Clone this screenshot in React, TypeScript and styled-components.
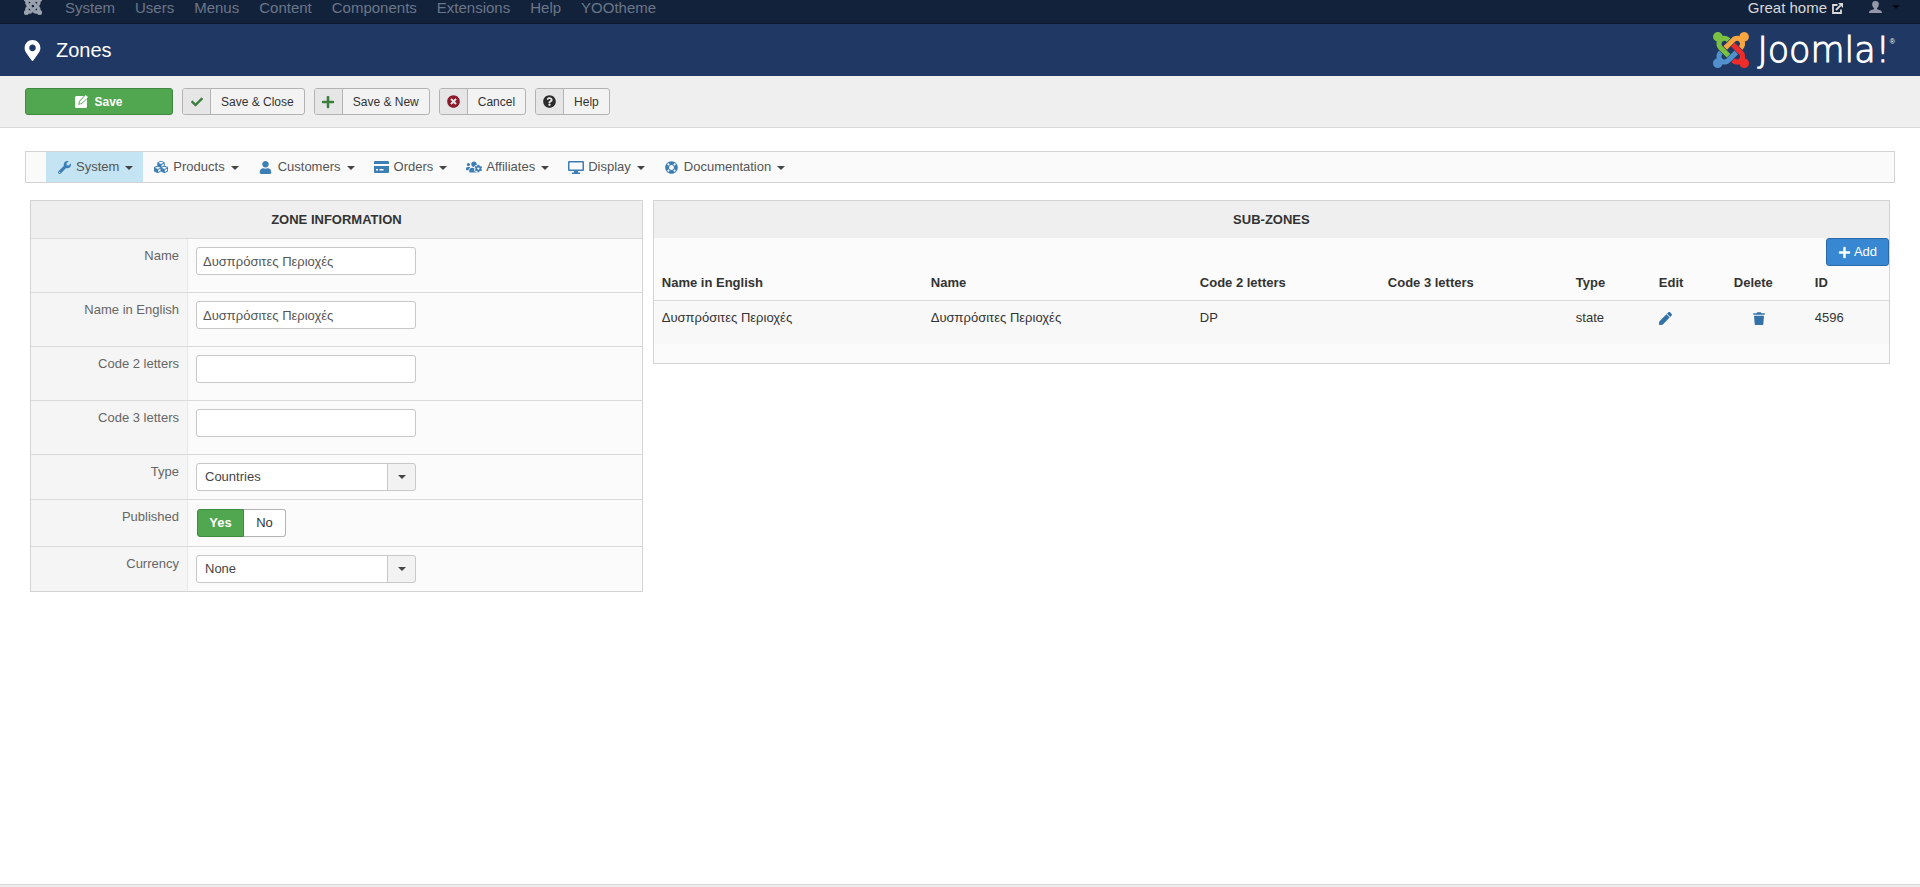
import React from 'react';
import styled, { createGlobalStyle } from 'styled-components';
import {
  FaCheck,
  FaCubes,
  FaLifeRing,
  FaMapMarkerAlt,
  FaPen,
  FaPlus,
  FaQuestionCircle,
  FaTimesCircle,
  FaUser,
  FaUsersCog,
  FaWrench,
} from 'react-icons/fa';

const GlobalStyle = createGlobalStyle`
  *, *::before, *::after { box-sizing: border-box; }
  body {
    margin: 0;
    background: #fff;
    color: #333;
    font: 13px/18px "Liberation Sans", Arial, sans-serif;
  }
  button, input, select { font: inherit; }
`;

const Page = styled.div`
  display: flex;
  flex-direction: column;
  min-height: 100vh;
`;

const TopBar = styled.nav`
  display: flex;
  align-items: flex-start;
  height: 24px;
  padding: 0 20px 0 24px;
  overflow: hidden;
  background: #13223b;
  border-bottom: 1px solid #0c192e;
  font-size: 15px;
  line-height: 16px;
`;

const BrandLink = styled.a`
  display: flex;
  margin-right: 23px;
  margin-top: -3px;
  color: #9ba3af;
`;

const TopMenu = styled.div`
  display: flex;
  gap: 20px;
  flex: 1;
`;

const TopLink = styled.a`
  color: #6b7688;
  text-decoration: none;
`;

const SiteLink = styled.a`
  display: flex;
  align-items: center;
  gap: 5px;
  color: #d9d9d9;
  text-decoration: none;
`;

const UserButton = styled.button`
  display: flex;
  align-items: center;
  gap: 10px;
  height: 14px;
  margin-left: 26px;
  padding: 0;
  border: 0;
  background: none;
  color: #9498a8;
`;

const Caret = styled.span<{ $color?: string; $size?: number }>`
  width: 0;
  height: 0;
  border: ${(p) => p.$size ?? 4}px solid transparent;
  border-top-color: ${(p) => p.$color ?? '#444'};
  border-bottom: 0;
`;

const Header = styled.header`
  display: flex;
  align-items: center;
  justify-content: space-between;
  height: 52px;
  padding: 0 25px;
  background: #1f3964;
  color: #fff;
`;

const Title = styled.h1`
  display: flex;
  align-items: center;
  gap: 16px;
  margin: 0;
  font-size: 20px;
  line-height: 24px;
  font-weight: 400;
`;

const TitleIcon = styled.span`
  display: flex;
  justify-content: center;
  width: 15px;

  svg { flex: none; }
`;

const Logo = styled.div`
  display: flex;
  align-items: center;
  gap: 8px;
`;

const WordMark = styled.span`
  display: flex;
  align-items: flex-start;
  font: 200 35px/36px "DejaVu Sans", sans-serif;
  -webkit-text-stroke: 1px #fff;

  sup {
    padding-top: 6px;
    font: 7px/8px "Liberation Sans", Arial, sans-serif;
    -webkit-text-stroke: 0;
  }
`;

const Toolbar = styled.div`
  display: flex;
  gap: 9px;
  padding: 12px 25px;
  background: #efefef;
  border-bottom: 1px solid #d9d9d9;
`;

const SaveButton = styled.button`
  display: flex;
  align-items: center;
  justify-content: center;
  gap: 6px;
  width: 148px;
  height: 27px;
  padding: 0;
  border: 1px solid #3f8a40;
  border-radius: 3px;
  background: #51a650;
  color: #fff;
  font-size: 12px;
  font-weight: 700;
`;

const ToolButton = styled.button<{ $tint: string }>`
  display: flex;
  align-items: stretch;
  height: 27px;
  padding: 0;
  border: 1px solid #b3b3b3;
  border-radius: 3px;
  overflow: hidden;
  background: #f3f3f3;
  color: #333;
  font-size: 12px;
  line-height: 26px;

  span:first-child {
    display: flex;
    align-items: center;
    justify-content: center;
    width: 28px;
    background: #e6e6e6;
    border-right: 1px solid #b3b3b3;
    color: ${(p) => p.$tint};
  }
  span:last-child { padding: 0 10px; }
`;

const Content = styled.main`
  flex: 1;
  padding: 23px 25px;
`;

const MenuBar = styled.nav`
  display: flex;
  height: 32px;
  padding-left: 20px;
  background: #fafafa;
  border: 1px solid #d3d3d3;
`;

const MenuItem = styled.a<{ $active?: boolean }>`
  display: flex;
  align-items: center;
  padding: 0 9px 0 10px;
  background: ${(p) => (p.$active ? '#c4e4f3' : 'transparent')};
  color: #555;
  text-decoration: none;

  &:first-child { padding-right: 10px; }
  ${Caret} { margin: 2px 0 0 6px; }
`;

const MenuIcon = styled.span`
  display: flex;
  justify-content: center;
  width: 16px;
  margin-right: 4px;
  color: #3d7fb5;
`;

const Panels = styled.div`
  display: flex;
  align-items: flex-start;
  gap: 10px;
  padding: 17px 5px;
`;

const Panel = styled.section<{ $wide?: boolean }>`
  ${(p) => (p.$wide ? 'flex: 1; min-width: 0;' : 'flex: 0 0 calc(33% - 1px);')}
  background: #fbfbfb;
  border: 1px solid #d3d3d3;
`;

const PanelTitle = styled.h2`
  margin: 0;
  height: 37px;
  background: #efefef;
  font-size: 13px;
  line-height: 38px;
  text-align: center;
  text-transform: uppercase;
`;

const Field = styled.div`
  display: flex;
  border-top: 1px solid #dadada;
`;

const FieldLabel = styled.label`
  width: 157px;
  padding: 8px 8px 0 0;
  background: #f5f5f5;
  border-right: 1px solid #e8e8e8;
  color: #666;
  text-align: right;
`;

const FieldValue = styled.div<{ $tall?: boolean }>`
  padding: 8px 8px ${(p) => (p.$tall ? 17 : 8)}px;
`;

const TextInput = styled.input`
  display: block;
  width: 220px;
  height: 28px;
  padding: 0 6px;
  border: 1px solid #c8c8c8;
  border-radius: 3px;
  background: #fff;
  color: #555;
`;

const SelectBox = styled.div`
  display: grid;
  grid-template-columns: 1fr 27px;
  align-items: center;
  width: 220px;
  height: 28px;
  border: 1px solid #c8c8c8;
  border-radius: 3px;
  overflow: hidden;
  background: linear-gradient(to left, #f2f2f2 27px, #c8c8c8 27px, #c8c8c8 28px, #fff 28px);

  select {
    grid-area: 1 / 1 / 2 / 3;
    height: 26px;
    padding: 0 8px;
    border: 0;
    appearance: none;
    background: none;
    color: #444;
  }
  ${Caret} {
    grid-area: 1 / 2;
    justify-self: center;
    pointer-events: none;
  }
`;

const Switch = styled.fieldset`
  display: flex;
  height: 28px;
  margin: 1px;
  padding: 0;
  border: 0;
`;

const SwitchOption = styled.label`
  display: flex;
  align-items: center;
  justify-content: center;
  width: 42px;
  border: 1px solid #b3b3b3;
  border-left: 0;
  border-radius: 0 3px 3px 0;
  background: #fff;

  input {
    appearance: none;
    width: 0;
    height: 0;
    margin: 0;
  }
  &:has(input:checked) {
    width: 47px;
    border: 1px solid #3f8a40;
    border-radius: 3px 0 0 3px;
    background: #51a650;
    color: #fff;
    font-weight: 700;
  }
`;

const PanelActions = styled.div`
  display: flex;
  justify-content: flex-end;
`;

const AddButton = styled.button`
  display: flex;
  align-items: center;
  justify-content: center;
  gap: 3px;
  width: 63px;
  height: 28px;
  padding: 0;
  border: 1px solid #2b6aa5;
  border-radius: 3px;
  background: #3787d2;
  color: #fff;
`;

const ZoneTable = styled.table`
  width: 100%;
  margin-bottom: 19px;
  border-spacing: 0;
  table-layout: fixed;

  th, td {
    padding: 8px;
    text-align: left;
    vertical-align: top;
  }
  th { border-bottom: 1px solid #dadada; }
  td {
    height: 43px;
    background: #f8f8f8;
  }
`;

const IconButton = styled.button<{ $indent?: boolean }>`
  display: flex;
  height: 18px;
  align-items: center;
  margin-left: ${(p) => (p.$indent ? 19 : 0)}px;
  padding: 0;
  border: 0;
  background: none;
  color: #3471a9;
`;

const Footer = styled.footer`
  height: 3px;
  background: #ebebeb;
  border-top: 1px solid #d9d9d9;
`;

/* The four interlocking arms of the Joomla mark, starting at the top left. */
const ARMS = [
  'M.6 92.1C.6 58.8 27.4 32 60.4 32c30 0 54.5 21.9 59.2 50.2 32.6-7.6 67.1.6 96.5 30l-44.3 44.3c-20.5-20.5-42.6-16.3-55.4-3.5-14.3 14.3-14.3 37.9 0 52.2l99.5 99.5-44 44.3c-87.7-87.2-49.7-49.7-99.8-99.7-26.8-26.5-35-64.8-24.8-98.9C20.4 144.6.6 120.7.6 92.1z',
  'M130.1 208.5l44.3 44.3c10-10 89.7-89.7 99.7-99.8 14.3-14.3 37.6-14.3 51.9 0 12.8 12.8 17 35-3.5 55.4l44 44.3c31.2-31.2 38.5-67.6 28.9-101.2 29.2-4.1 51.9-29.2 51.9-59.5 0-33.2-26.8-60.1-59.8-60.1-30.3 0-55.4 22.5-59.5 51.6-33.8-9.9-71.7-1.5-98.3 25.1-18.3 19.1-71.1 71.5-99.6 99.9z',
  'M396.4 360.7c8.2-32.7-.9-68.5-26.3-93.9-11.8-12.2 5 4.7-99.5-99.7l-44.3 44.3 99.7 99.7c14.3 14.3 14.3 37.6 0 51.9-12.8 12.8-35 17-55.4-3.5l-44 44.3c27.6 30.2 68 38.8 102.7 28 5.5 27.4 29.7 48.1 58.9 48.1 33 0 59.8-26.8 59.8-60.1 0-30.2-22.5-55-51.6-59.1z',
  'M312.1 307.6l-44-44.3c-87 86.4-50.4 50.4-99.7 99.8-14.3 14.3-37.6 14.3-51.9 0-13.1-13.4-16.9-35.3 3.2-55.4l-44-44.3c-30.2 30.2-38 65.2-29.5 98.3-26.7 6-46.2 29.9-46.2 58.2C0 453.2 26.8 480 59.8 480c28.6 0 52.5-19.8 58.6-46.7 32.7 8.2 68.5-.6 94.2-26 32.1-32 12.2-12.4 99.5-99.7z',
];

const JoomlaMark = ({ size, colors, weight = 0 }: { size: number; colors: string[]; weight?: number }) => (
  <svg width={size} height={size} viewBox="0 32 448 448" aria-hidden="true">
    {ARMS.map((d, i) => {
      const color = colors[i % colors.length];
      return <path key={i} d={d} fill={color} stroke={color} strokeWidth={weight} />;
    })}
  </svg>
);

const ExternalIcon = () => (
  <svg width="11" height="11" viewBox="0 0 11 11" fill="none" stroke="currentColor" strokeWidth="1.8" aria-hidden="true">
    <path d="M5.500 2H1v8h8V6.400M4 7l4.600-4.600" />
    <path d="M6 0h5v5z" fill="currentColor" stroke="none" />
  </svg>
);

const BustIcon = () => (
  <svg width="13" height="12" viewBox="0 0 12 11.500" preserveAspectRatio="none" fill="currentColor" aria-hidden="true">
    <path d="M6 0C4 0 2.900 1.200 2.900 3c0 1.600.7 3 1.700 3.800V8C2.600 8.500 0 9 0 11.500h12C12 9 9.400 8.500 7.400 8V6.800C8.400 6 9.100 4.600 9.100 3 9.100 1.200 8 0 6 0z" />
  </svg>
);

const SaveIcon = () => (
  <svg width="13" height="13" viewBox="0 0 13 13" aria-hidden="true">
    <path
      fill="currentColor"
      fillRule="evenodd"
      d="M1.500 1H9L4 6.200 3.200 9.800 6.800 9 12 3.900v7.600a1.500 1.500 0 0 1-1.500 1.500h-9A1.500 1.500 0 0 1 0 11.500v-9A1.500 1.500 0 0 1 1.500 1z"
    />
    <path fill="currentColor" d="M10.800 0L13 2.200 6.500 8.200 4.400 8.700 4.900 6.500z" />
  </svg>
);

const CardIcon = () => (
  <svg width="15" height="12" viewBox="0 0 15 12" aria-hidden="true">
    <path fill="currentColor" fillRule="evenodd" d="M1 0h13a1 1 0 0 1 1 1v2H0V1a1 1 0 0 1 1-1zM0 5h15v6a1 1 0 0 1-1 1H1a1 1 0 0 1-1-1zm2 3v1.500h2V8zm3.500 0v1.500h4V8z" />
  </svg>
);

const ScreenIcon = () => (
  <svg width="16" height="13" viewBox="0 0 16 13" aria-hidden="true">
    <path fill="currentColor" fillRule="evenodd" d="M1 0h14a1 1 0 0 1 1 1v8a1 1 0 0 1-1 1H10v1.500h2V13H4v-1.500h2V10H1a1 1 0 0 1-1-1V1a1 1 0 0 1 1-1zm.5 1.500v7h13v-7z" />
  </svg>
);

const TrashIcon = () => (
  <svg width="12" height="13" viewBox="0 0 12 13" fill="currentColor" aria-hidden="true">
    <path d="M.3 1.200h3.200L4.200.3h3.600l.7.9h3.200v1.500H.3zM1 3.700h10l-.7 8.500a.8.8 0 0 1-.8.8h-7a.8.8 0 0 1-.8-.8z" />
  </svg>
);

const topLinks = ['System', 'Users', 'Menus', 'Content', 'Components', 'Extensions', 'Help', 'YOOtheme'];

const tools = [
  { label: 'Save & Close', tint: '#3c7f3e', icon: <FaCheck size={12} /> },
  { label: 'Save & New', tint: '#3c7f3e', icon: <FaPlus size={14} /> },
  { label: 'Cancel', tint: '#8b1a2b', icon: <FaTimesCircle size={13} /> },
  { label: 'Help', tint: '#2b2b2b', icon: <FaQuestionCircle size={13} /> },
];

const menu = [
  { label: 'System', icon: <FaWrench size={13} /> },
  { label: 'Products', icon: <FaCubes size={14} /> },
  { label: 'Customers', icon: <FaUser size={13} /> },
  { label: 'Orders', icon: <CardIcon /> },
  { label: 'Affiliates', icon: <FaUsersCog size={16} /> },
  { label: 'Display', icon: <ScreenIcon /> },
  { label: 'Documentation', icon: <FaLifeRing size={13} /> },
];

const textFields = [
  { id: 'name', label: 'Name', value: 'Δυσπρόσιτες Περιοχές' },
  { id: 'name-english', label: 'Name in English', value: 'Δυσπρόσιτες Περιοχές' },
  { id: 'code-2', label: 'Code 2 letters', value: '' },
  { id: 'code-3', label: 'Code 3 letters', value: '' },
];

const columns = [
  { label: 'Name in English', width: '269px' },
  { label: 'Name', width: '269px' },
  { label: 'Code 2 letters', width: '188px' },
  { label: 'Code 3 letters', width: '188px' },
  { label: 'Type', width: '83px' },
  { label: 'Edit', width: '75px' },
  { label: 'Delete', width: '81px' },
  { label: 'ID', width: undefined },
];

const SelectField = ({ id, label, options }: { id: string; label: string; options: string[] }) => (
  <Field>
    <FieldLabel htmlFor={id}>{label}</FieldLabel>
    <FieldValue>
      <SelectBox>
        <select id={id}>
          {options.map((o) => (
            <option key={o}>{o}</option>
          ))}
        </select>
        <Caret />
      </SelectBox>
    </FieldValue>
  </Field>
);

export default function App() {
  return (
    <Page>
      <GlobalStyle />
      <TopBar>
        <BrandLink href="#" aria-label="Joomla">
          <JoomlaMark size={18} colors={['currentColor']} weight={24} />
        </BrandLink>
        <TopMenu>
          {topLinks.map((t) => (
            <TopLink key={t} href="#">{t}</TopLink>
          ))}
        </TopMenu>
        <SiteLink href="#">
          Great home <ExternalIcon />
        </SiteLink>
        <UserButton aria-label="User menu">
          <BustIcon />
          <Caret $color="#050a12" />
        </UserButton>
      </TopBar>

      <Header>
        <Title>
          <TitleIcon>
            <FaMapMarkerAlt size={21} />
          </TitleIcon>
          Zones
        </Title>
        <Logo>
          <JoomlaMark size={36} colors={['#7ac143', '#f9a541', '#ee2d2a', '#5091cd']} />
          <WordMark>
            Joomla!<sup>®</sup>
          </WordMark>
        </Logo>
      </Header>

      <Toolbar>
        <SaveButton>
          <SaveIcon />
          Save
        </SaveButton>
        {tools.map((t) => (
          <ToolButton key={t.label} $tint={t.tint}>
            <span>{t.icon}</span>
            <span>{t.label}</span>
          </ToolButton>
        ))}
      </Toolbar>

      <Content>
        <MenuBar>
          {menu.map((m, i) => (
            <MenuItem key={m.label} href="#" $active={i === 0}>
              <MenuIcon>{m.icon}</MenuIcon>
              {m.label}
              <Caret />
            </MenuItem>
          ))}
        </MenuBar>

        <Panels>
          <Panel>
            <PanelTitle>Zone information</PanelTitle>
            {textFields.map((f) => (
              <Field key={f.id}>
                <FieldLabel htmlFor={f.id}>{f.label}</FieldLabel>
                <FieldValue $tall>
                  <TextInput id={f.id} type="text" defaultValue={f.value} />
                </FieldValue>
              </Field>
            ))}
            <SelectField id="type" label="Type" options={['Countries']} />
            <Field>
              <FieldLabel as="span" id="published">Published</FieldLabel>
              <FieldValue>
                <Switch aria-labelledby="published">
                  <SwitchOption>
                    <input type="radio" name="published" defaultChecked />
                    Yes
                  </SwitchOption>
                  <SwitchOption>
                    <input type="radio" name="published" />
                    No
                  </SwitchOption>
                </Switch>
              </FieldValue>
            </Field>
            <SelectField id="currency" label="Currency" options={['None']} />
          </Panel>

          <Panel $wide>
            <PanelTitle>Sub-zones</PanelTitle>
            <PanelActions>
              <AddButton>
                <FaPlus size={13} />
                Add
              </AddButton>
            </PanelActions>
            <ZoneTable>
              <colgroup>
                {columns.map((c) => (
                  <col key={c.label} width={c.width} />
                ))}
              </colgroup>
              <thead>
                <tr>
                  {columns.map((c) => (
                    <th key={c.label} scope="col">{c.label}</th>
                  ))}
                </tr>
              </thead>
              <tbody>
                <tr>
                  <td>Δυσπρόσιτες Περιοχές</td>
                  <td>Δυσπρόσιτες Περιοχές</td>
                  <td>DP</td>
                  <td />
                  <td>state</td>
                  <td>
                    <IconButton aria-label="Edit"><FaPen size={13} /></IconButton>
                  </td>
                  <td>
                    <IconButton $indent aria-label="Delete"><TrashIcon /></IconButton>
                  </td>
                  <td>4596</td>
                </tr>
              </tbody>
            </ZoneTable>
          </Panel>
        </Panels>
      </Content>
      <Footer />
    </Page>
  );
}
